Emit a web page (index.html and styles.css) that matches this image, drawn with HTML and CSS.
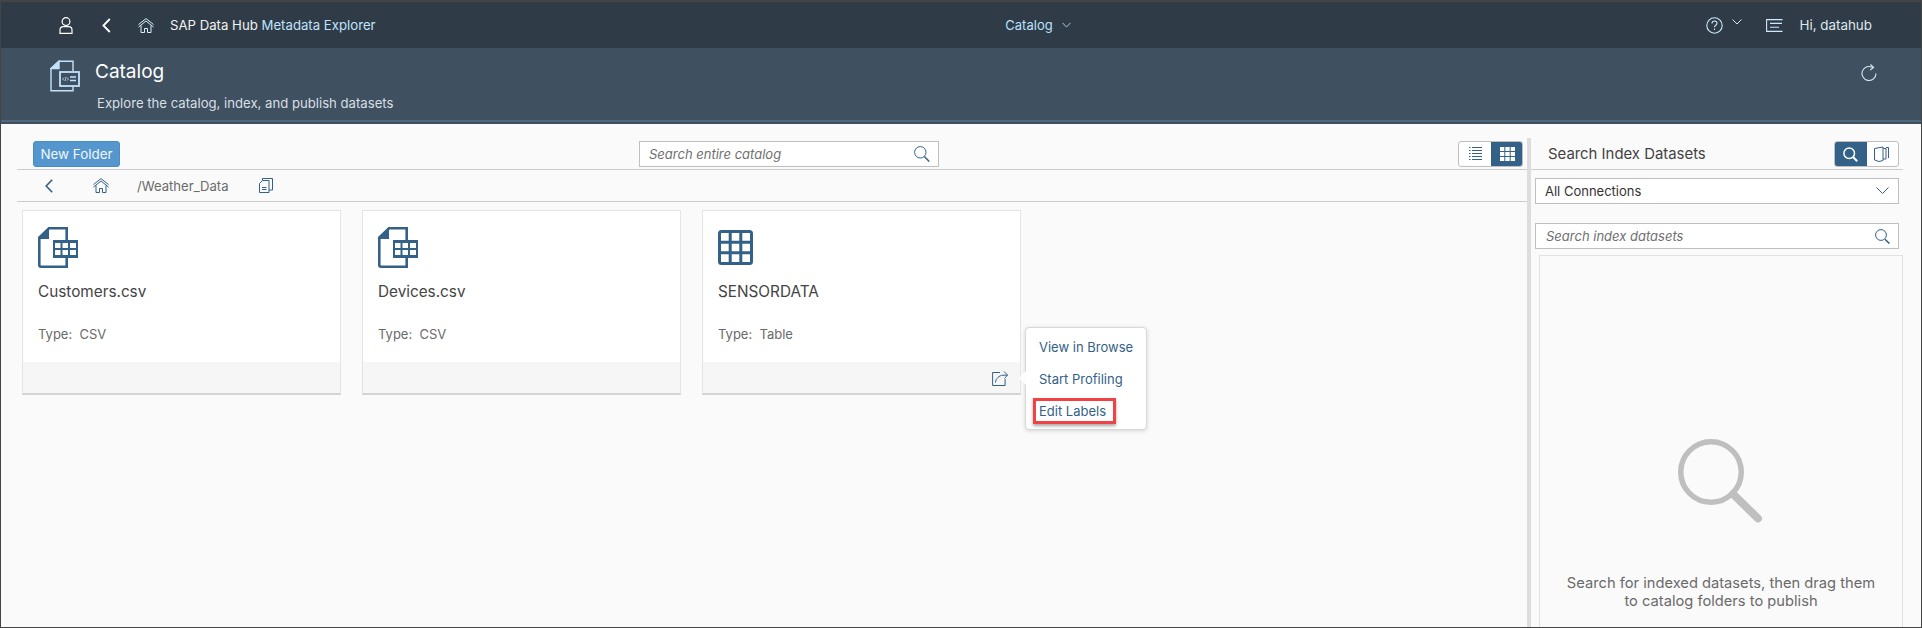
FILE: index.html
```html
<!doctype html>
<html>
<head>
  <meta charset="utf-8">
  <title>SAP Data Hub Metadata Explorer</title>
  <link rel="stylesheet" href="styles.css">
</head>
<body>
<div class="frame">

  <!-- shell bar -->
  <div class="shell">
    <div class="shell_left">
      <svg class="ic_user" width="14" height="17" viewBox="0 0 14 17" fill="none" stroke="#fff" stroke-width="1.2"><circle cx="7" cy="4.600" r="3.900"/><path d="M1 16.400v-3.400c0-2 1.400-3.400 3.400-3.400h5.200c2 0 3.400 1.400 3.400 3.400v3.400z"/></svg>
      <svg class="ic_back" width="9" height="15" viewBox="0 0 9 15" fill="none" stroke="#fff" stroke-width="1.8"><path d="M7.800 1 1.400 7.500l6.400 6.500"/></svg>
      <svg class="ic_home" width="16" height="15" viewBox="0 0 16 15" fill="none" stroke="#d8eeff" stroke-width="1"><path d="M.5 6.500 8 .6l7.500 5.900M.5 9 8 3l7.500 6M3 7.500v7h3.500v-4h3v4H13v-7"/></svg>
      <span class="app_title">SAP Data Hub <em>Metadata Explorer</em></span>
    </div>
    <div class="shell_mid">
      <span>Catalog</span>
      <svg width="9" height="6" viewBox="0 0 9 6" fill="none" stroke="#a9c9df" stroke-width="1"><path d="M.5.8 4.500 5 8.500.8"/></svg>
    </div>
    <div class="shell_right">
      <svg class="ic_help" width="17" height="17" viewBox="0 0 17 17" fill="none" stroke="#cfe9fd" stroke-width="1.100"><circle cx="8.500" cy="8.500" r="7.700"/><path d="M6 6.400c0-1.500 1.100-2.400 2.500-2.400s2.500.9 2.500 2.300c0 1.900-2.500 1.900-2.500 3.900"/><path d="M8.500 11.600v1.400"/></svg>
      <svg class="ic_chev" width="10" height="6" viewBox="0 0 10 6" fill="none" stroke="#cfe9fd" stroke-width="1"><path d="M.5.5 5 5 9.500.5"/></svg>
      <svg class="ic_notif" width="17" height="13" viewBox="0 0 17 13" fill="none" stroke="#cfe9fd" stroke-width="1.100"><path d="M16.500.6H.6v11.800h15.900M4 4.400h12M4 8.200h9"/></svg>
      <span class="hi">Hi, datahub</span>
    </div>
  </div>

  <!-- page header -->
  <div class="subhead">
    <svg class="ic_catalog" width="30" height="32" viewBox="0 0 30 32" fill="none" stroke="#c3e2fa" stroke-width="1.400">
      <path d="M23 11V1.200H9L1 8.500V30.800H23V26"/>
      <path d="M1 8.500 9 1.200V8.500z" fill="#c3e2fa"/>
      <rect x="10" y="12" width="19" height="14" stroke-width="1.800"/>
      <path d="M20 17h6M20 20.500h6" stroke-width="1.500"/>
      <path d="M14 17.500 12.500 19l1.500 1.500M17 17.500l1.500 1.500-1.500 1.500M16 17 15 21" stroke-width=".8"/>
    </svg>
    <div class="subhead_text">
      <h1>Catalog</h1>
      <p>Explore the catalog, index, and publish datasets</p>
    </div>
    <svg class="ic_refresh" width="16" height="17" viewBox="0 0 16 17" fill="none" stroke="#dbe6ee" stroke-width="1.100"><path d="M11.800 3.600A7 7 0 1 0 15 9.500"/><path d="M9.500.5 12.600 3.500 9.200 6"/></svg>
  </div>

  <div class="main">

    <!-- catalog -->
    <div class="catalog">
      <div class="toolbar">
        <button class="btn_new">New Folder</button>
        <div class="search search_top">
          <span>Search entire catalog</span>
          <svg width="16" height="16" viewBox="0 0 16 16" fill="none" stroke="#346187" stroke-width="1"><circle cx="6.300" cy="6.300" r="5.700"/><path d="m10.400 10.600 4.800 4.900" stroke-width="1.500"/></svg>
        </div>
        <div class="seg">
          <div class="seg_btn seg_list">
            <svg width="13" height="14" viewBox="0 0 13 14" fill="none" stroke="#346187" stroke-width="1"><path d="M0 .5h1.500M3 .5h10M0 3.500h1.500M3 3.500h10M0 6.500h1.500M3 6.500h10M0 9.500h1.500M3 9.500h10M0 12.500h1.500M3 12.500h10"/></svg>
          </div>
          <div class="seg_btn seg_on seg_grid">
            <svg width="15" height="14" viewBox="0 0 15 14" fill="#fff"><path d="M0 0h4.300v4H0zM5.300 0h4.400v4H5.300zM10.700 0H15v4h-4.300zM0 5h4.300v4H0zM5.300 5h4.400v4H5.300zM10.700 5H15v4h-4.300zM0 10h4.300v4H0zM5.300 10h4.400v4H5.300zM10.700 10H15v4h-4.300z"/></svg>
          </div>
        </div>
      </div>

      <div class="crumbs">
        <svg class="cr_back" width="8" height="14" viewBox="0 0 8 14" fill="none" stroke="#346187" stroke-width="1.600"><path d="M7.200.8 1.200 7l6 6.200"/></svg>
        <svg class="cr_home" width="16" height="15" viewBox="0 0 16 15" fill="none" stroke="#346187" stroke-width="1"><path d="M.5 6.500 8 .6l7.500 5.900M.5 9 8 3l7.500 6M3 7.500v7h3.500v-4h3v4H13v-7"/></svg>
        <span class="cr_path">/Weather_Data</span>
        <svg class="cr_copy" width="14" height="15" viewBox="0 0 14 15" fill="none" stroke="#346187" stroke-width="1"><path d="M.5 5.500 3.500 2.500h6.500v12H.5zM3.500 2.500V.5h10v11.500H10"/><path d="M3 9.500h4.500M3 11.500h4.500"/></svg>
      </div>

      <div class="cards">
        <div class="card">
          <div class="card_body">
            <svg class="card_icon" width="40" height="41" viewBox="0 0 40 41" fill="none" stroke="#346187">
              <path d="M28.700 13V1.300H11L1.300 10.500V38c0 1 .6 1.700 1.700 1.700h25.700V31" stroke-width="2.600"/>
              <path d="M0 12 11 0V12z" fill="#346187" stroke="none"/>
              <path fill="#346187" stroke="none" d="M15 13h25v18H15zM17 16v5h5.500v-5zM24.500 16v5H30v-5zM32 16v5h6v-5zM17 23v5h5.500v-5zM24.500 23v5H30v-5zM32 23v5h6v-5z" fill-rule="evenodd"/>
            </svg>
            <div class="card_name">Customers.csv</div>
            <div class="card_type">Type:&nbsp; CSV</div>
          </div>
          <div class="card_foot"></div>
        </div>

        <div class="card">
          <div class="card_body">
            <svg class="card_icon" width="40" height="41" viewBox="0 0 40 41" fill="none" stroke="#346187">
              <path d="M28.700 13V1.300H11L1.300 10.500V38c0 1 .6 1.700 1.700 1.700h25.700V31" stroke-width="2.600"/>
              <path d="M0 12 11 0V12z" fill="#346187" stroke="none"/>
              <path fill="#346187" stroke="none" d="M15 13h25v18H15zM17 16v5h5.500v-5zM24.500 16v5H30v-5zM32 16v5h6v-5zM17 23v5h5.500v-5zM24.500 23v5H30v-5zM32 23v5h6v-5z" fill-rule="evenodd"/>
            </svg>
            <div class="card_name">Devices.csv</div>
            <div class="card_type">Type:&nbsp; CSV</div>
          </div>
          <div class="card_foot"></div>
        </div>

        <div class="card">
          <div class="card_body">
            <svg class="card_icon" width="40" height="41" viewBox="0 0 40 41" fill="none" stroke="#346187" stroke-width="3">
              <rect x="1.500" y="4.500" width="32" height="32" rx="2"/>
              <path d="M12.200 5v31M22.800 5v31M2 15.200h31M2 25.800h31"/>
            </svg>
            <div class="card_name">SENSORDATA</div>
            <div class="card_type">Type:&nbsp; Table</div>
          </div>
          <div class="card_foot">
            <svg width="16" height="16" viewBox="0 0 16 16" fill="none" stroke="#346187" stroke-width="1"><path d="M8 2.500H.6v13h12.500V9"/><path d="M3.500 12.500c.3-4 3.500-7 7.500-7.300h4.500"/><path d="M12 1.500 15.500 5 12.500 8.500"/></svg>
          </div>
        </div>

        <!-- popover for the third card -->
        <div class="popover">
          <div class="pop_item">View in Browse</div>
          <div class="pop_item">Start Profiling</div>
          <div class="pop_item"><span class="marked">Edit Labels</span></div>
        </div>
      </div>
    </div>

    <div class="splitter"></div>

    <!-- index search -->
    <div class="side">
      <div class="side_head">
        <span class="side_title">Search Index Datasets</span>
        <div class="seg">
          <div class="seg_btn seg_on">
            <svg width="15" height="15" viewBox="0 0 15 15" fill="none" stroke="#fff" stroke-width="1.500"><circle cx="6.200" cy="6.200" r="5.300"/><path d="m10 10 4.200 4.200" stroke-width="2"/></svg>
          </div>
          <div class="seg_btn">
            <svg width="15" height="16" viewBox="0 0 15 16" fill="none" stroke="#346187" stroke-width="1"><path d="M.5 2.500 9 1v13.500l-4 1-4.500-1.500zM9 2.500h3V13H9M12 1.500h2.500V12"/></svg>
          </div>
        </div>
      </div>
      <div class="select">
        <span>All Connections</span>
        <svg width="13" height="7" viewBox="0 0 13 7" fill="none" stroke="#346187" stroke-width="1"><path d="M.5.5 6.500 6.500 12.500.5"/></svg>
      </div>
      <div class="search search_side">
        <span>Search index datasets</span>
        <svg width="15" height="15" viewBox="0 0 15 15" fill="none" stroke="#346187" stroke-width="1"><circle cx="6" cy="6" r="5.400"/><path d="m10 10.200 4.400 4.400" stroke-width="1.500"/></svg>
      </div>
      <div class="results">
        <svg class="empty_icon" width="86" height="86" viewBox="0 0 86 86" fill="none" stroke="#bfbfbf"><circle cx="33" cy="33" r="30.250" stroke-width="5.500"/><path d="m55 55 25 24.500" stroke-width="8" stroke-linecap="round"/></svg>
        <div class="empty_text">Search for indexed datasets, then drag them<br>to catalog folders to publish</div>
      </div>
    </div>

  </div>
</div>
</body>
</html>
```

FILE: styles.css
```css
html, body {
  margin: 0;
  height: 100%;
  overflow: hidden;
  font-family: Inter, "Noto Sans", sans-serif;
  background: #fafafa;
}

.frame {
  height: 628px;
  box-sizing: border-box;
  border: 1px solid #444;
  border-top-width: 2px;
  display: flex;
  flex-direction: column;
  overflow: hidden;
}

/* shell bar */
.shell {
  height: 46px;
  flex: none;
  background: #2f3c48;
  display: grid;
  grid-template-columns: 1fr auto 1fr;
  align-items: center;
  color: #fff;
  font-size: 13px;
}

.shell_left, .shell_mid, .shell_right {
  display: flex;
  align-items: center;
}

.shell_left { padding-left: 58px; }
.ic_back { margin-left: 29px; }
.ic_home { margin-left: 27px; }
.app_title { margin-left: 16px; font-size: 13.200px; color: #f2f2f2; }
.app_title em { font-style: normal; color: #bfe3fb; }

.shell_mid { color: #b9e0fb; gap: 9px; padding-left: 154px; }

.shell_right { justify-content: flex-end; padding-right: 49px; }
.ic_chev { margin: 0 0 6px 9px; }
.ic_notif { margin-left: 24px; }
.hi { margin-left: 16px; color: #dfe7ed; font-size: 13.400px; }

/* page header */
.subhead {
  height: 72px;
  flex: none;
  background: #3f5161;
  border-bottom: 2px solid #4f687e;
  box-shadow: 0 2px 0 #3f4f5e;
  display: flex;
  align-items: flex-start;
  position: relative;
  z-index: 1;
}

.ic_catalog { margin: 12px 0 0 49px; }
.subhead_text { margin-left: 15px; color: #fff; }

.subhead h1 {
  margin: 10px 0 0;
  font-size: 19px;
  font-weight: 400;
  line-height: 27px;
}

.subhead p {
  margin: 9px 0 0 2px;
  font-size: 13.150px;
  line-height: 18px;
  color: #d9dfe4;
}

.ic_refresh { margin: 16px 44px 0 auto; }

/* main area */
.main {
  flex: 1;
  display: flex;
  min-height: 0;
  padding-top: 2px;
}

.catalog {
  width: 1526px;
  flex: none;
  box-sizing: border-box;
  padding-left: 16px;
}

.toolbar {
  height: 46px;
  box-sizing: border-box;
  padding: 17px 4px 0 16px;
  border-bottom: 1px solid #ccc;
  display: flex;
  justify-content: space-between;
  align-items: flex-start;
}

.btn_new {
  width: 87px;
  height: 26px;
  padding: 0;
  border: 1px solid #4a8cc4;
  border-radius: 3px;
  background: #5496cd;
  color: #f2f7fb;
  font: 13.400px Inter, "Noto Sans", sans-serif;
}

.search {
  height: 26px;
  box-sizing: border-box;
  border: 1px solid #bfbfbf;
  background: #fff;
  display: flex;
  align-items: center;
  justify-content: space-between;
  font-style: italic;
  color: #707070;
}

.search_top { width: 300px; padding: 0 8px 0 9px; font-size: 13px; }

.seg {
  width: 65px;
  height: 26px;
  box-sizing: border-box;
  border: 1px solid #bfbfbf;
  border-radius: 3px;
  background: #fff;
  display: flex;
  overflow: hidden;
}

.seg_btn {
  flex: 1;
  display: flex;
  align-items: center;
  justify-content: center;
}

.seg_on { background: #346187; margin: -1px; }
.seg_list { flex: 1.050; }

.crumbs {
  height: 32px;
  box-sizing: border-box;
  border-bottom: 1px solid #ccc;
  display: flex;
  align-items: center;
}

.cr_back { margin-left: 28px; }
.cr_home { margin-left: 40px; }
.cr_path { margin-left: 28px; font-size: 13.100px; color: #6a6a6a; }
.cr_copy { margin-left: 30px; }

.cards {
  display: flex;
  gap: 21px;
  padding: 8px 0 0 5px;
  position: relative;
}

.card {
  width: 319px;
  height: 185px;
  box-sizing: border-box;
  border: 1px solid #e4e4e4;
  border-bottom: 2px solid #d4d4d4;
  background: #fff;
  display: flex;
  flex-direction: column;
}

.card_body {
  flex: 1;
  padding: 16px 0 0 15px;
}

.card_icon { display: block; }

.card_name {
  margin-top: 13px;
  font-size: 15.300px;
  line-height: 22px;
  color: #444;
}

.card_type {
  margin-top: 22px;
  font-size: 13px;
  line-height: 18px;
  color: #6a6a6a;
}

.card_foot {
  height: 31px;
  background: #f6f6f6;
  display: flex;
  align-items: center;
  justify-content: flex-end;
  padding-right: 12px;
}

.popover {
  position: absolute;
  left: 1008px;
  top: 125px;
  width: 122px;
  height: 103px;
  box-sizing: border-box;
  padding: 3px 0 0 13px;
  background: #fff;
  border: 1px solid #d8d8d8;
  border-radius: 4px;
  box-shadow: 0 1px 4px rgba(0, 0, 0, .15);
  font-size: 13px;
  color: #346187;
}

.popover::before {
  content: "";
  position: absolute;
  left: -7px;
  top: 43px;
  border: 7px solid transparent;
  border-left-width: 0;
  border-right-color: #fff;
}

.pop_item {
  height: 32px;
  display: flex;
  align-items: center;
}

.marked {
  margin-left: -6px;
  padding: 2px 7px 2px 3px;
  line-height: 16px;
  border: 3px solid #f04444;
  box-shadow: 0 2px 3px rgba(0, 0, 0, .35);
}

/* index search */
.splitter {
  width: 4px;
  flex: none;
  margin-top: 14px;
  background: #ddd;
}

.side {
  flex: 1;
  min-width: 0;
  box-sizing: border-box;
  padding-right: 18px;
}

.side_head {
  height: 46px;
  box-sizing: border-box;
  border-bottom: 1px solid #ccc;
  padding: 17px 4px 0 17px;
  display: flex;
  justify-content: space-between;
  align-items: flex-start;
}

.side_title {
  font-size: 14.900px;
  line-height: 26px;
  color: #444;
}

.select {
  height: 26px;
  box-sizing: border-box;
  margin: 8px 4px 0 4px;
  padding: 0 9px 1px;
  border: 1px solid #bfbfbf;
  background: #fff;
  display: flex;
  align-items: center;
  justify-content: space-between;
  font-size: 13px;
  color: #333;
}

.search_side {
  margin: 19px 4px 0 4px;
  padding: 0 8px 0 10px;
  font-size: 13px;
}

.results {
  height: 400px;
  margin: 6px 0 0 8px;
  border: 1px solid #e2e2e2;
  border-bottom: 0;
  text-align: center;
}

.empty_icon {
  display: block;
  margin: 183px auto 0;
}

.empty_text {
  margin-top: 49px;
  font-size: 14.700px;
  line-height: 18px;
  color: #6a6a6a;
}
```
